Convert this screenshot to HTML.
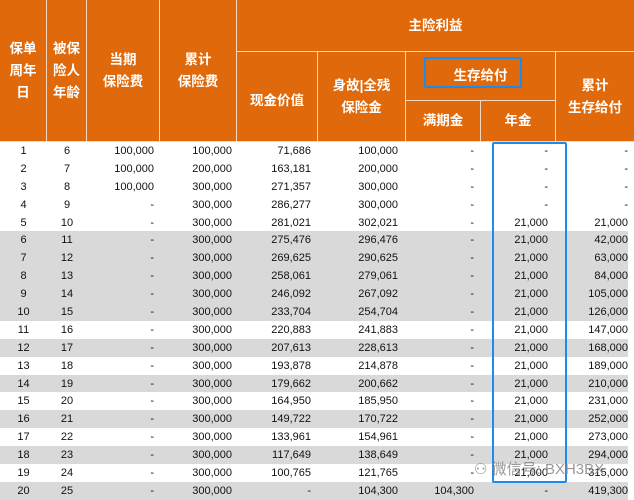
<!DOCTYPE html>
<html><head><meta charset="utf-8"><style>
*{margin:0;padding:0;box-sizing:border-box}
body{width:634px;height:500px;overflow:hidden;background:#fff;position:relative;font-family:"Liberation Sans","Noto Sans CJK SC",sans-serif}
.h{position:absolute;background:#E0690B;color:#fff;font-weight:bold;font-size:13.5px;display:flex;align-items:center;justify-content:center;text-align:center;line-height:22px;border-right:1.5px solid #f6d7bd;border-bottom:1.5px solid #f6d7bd}
table{position:absolute;left:0;top:142px;border-collapse:collapse;font-size:11px;color:#111}
td{height:17.9px;padding:0;text-align:right;white-space:nowrap}
td:nth-child(1),td:nth-child(2){text-align:center}
tr.g td{background:#d9d9d9}
.bx{position:absolute;border:2.5px solid #1a8cf0;border-radius:2px}
</style></head><body>
<div class="h" style="left:0;top:0;width:47px;height:142px">保单<br>周年<br>日</div>
<div class="h" style="left:47px;top:0;width:40px;height:142px">被保<br>险人<br>年龄</div>
<div class="h" style="left:87px;top:0;width:73px;height:142px">当期<br>保险费</div>
<div class="h" style="left:160px;top:0;width:77px;height:142px">累计<br>保险费</div>
<div class="h" style="left:237px;top:0;width:397px;height:52px;border-right:none">主险利益</div>
<div class="h" style="left:237px;top:52px;width:81px;height:90px;padding-top:8px">现金价值</div>
<div class="h" style="left:318px;top:52px;width:88px;height:90px">身故|全残<br>保险金</div>
<div class="h" style="left:406px;top:52px;width:150px;height:49px">生存给付</div>
<div class="h" style="left:406px;top:101px;width:75px;height:41px">满期金</div>
<div class="h" style="left:481px;top:101px;width:75px;height:41px">年金</div>
<div class="h" style="left:556px;top:52px;width:78px;height:90px;border-right:none">累计<br>生存给付</div>
<div class="bx" style="left:424px;top:57px;width:98px;height:31px"></div>
<table>
<colgroup><col style="width:47px"><col style="width:40px"><col style="width:67px"><col style="width:78px"><col style="width:79px"><col style="width:87px"><col style="width:76px"><col style="width:74px"><col style="width:80px"></colgroup>
<tr><td>1</td><td>6</td><td>100,000</td><td>100,000</td><td>71,686</td><td>100,000</td><td>-</td><td>-</td><td>-</td></tr>
<tr><td>2</td><td>7</td><td>100,000</td><td>200,000</td><td>163,181</td><td>200,000</td><td>-</td><td>-</td><td>-</td></tr>
<tr><td>3</td><td>8</td><td>100,000</td><td>300,000</td><td>271,357</td><td>300,000</td><td>-</td><td>-</td><td>-</td></tr>
<tr><td>4</td><td>9</td><td>-</td><td>300,000</td><td>286,277</td><td>300,000</td><td>-</td><td>-</td><td>-</td></tr>
<tr><td>5</td><td>10</td><td>-</td><td>300,000</td><td>281,021</td><td>302,021</td><td>-</td><td>21,000</td><td>21,000</td></tr>
<tr class="g"><td>6</td><td>11</td><td>-</td><td>300,000</td><td>275,476</td><td>296,476</td><td>-</td><td>21,000</td><td>42,000</td></tr>
<tr class="g"><td>7</td><td>12</td><td>-</td><td>300,000</td><td>269,625</td><td>290,625</td><td>-</td><td>21,000</td><td>63,000</td></tr>
<tr class="g"><td>8</td><td>13</td><td>-</td><td>300,000</td><td>258,061</td><td>279,061</td><td>-</td><td>21,000</td><td>84,000</td></tr>
<tr class="g"><td>9</td><td>14</td><td>-</td><td>300,000</td><td>246,092</td><td>267,092</td><td>-</td><td>21,000</td><td>105,000</td></tr>
<tr class="g"><td>10</td><td>15</td><td>-</td><td>300,000</td><td>233,704</td><td>254,704</td><td>-</td><td>21,000</td><td>126,000</td></tr>
<tr><td>11</td><td>16</td><td>-</td><td>300,000</td><td>220,883</td><td>241,883</td><td>-</td><td>21,000</td><td>147,000</td></tr>
<tr class="g"><td>12</td><td>17</td><td>-</td><td>300,000</td><td>207,613</td><td>228,613</td><td>-</td><td>21,000</td><td>168,000</td></tr>
<tr><td>13</td><td>18</td><td>-</td><td>300,000</td><td>193,878</td><td>214,878</td><td>-</td><td>21,000</td><td>189,000</td></tr>
<tr class="g"><td>14</td><td>19</td><td>-</td><td>300,000</td><td>179,662</td><td>200,662</td><td>-</td><td>21,000</td><td>210,000</td></tr>
<tr><td>15</td><td>20</td><td>-</td><td>300,000</td><td>164,950</td><td>185,950</td><td>-</td><td>21,000</td><td>231,000</td></tr>
<tr class="g"><td>16</td><td>21</td><td>-</td><td>300,000</td><td>149,722</td><td>170,722</td><td>-</td><td>21,000</td><td>252,000</td></tr>
<tr><td>17</td><td>22</td><td>-</td><td>300,000</td><td>133,961</td><td>154,961</td><td>-</td><td>21,000</td><td>273,000</td></tr>
<tr class="g"><td>18</td><td>23</td><td>-</td><td>300,000</td><td>117,649</td><td>138,649</td><td>-</td><td>21,000</td><td>294,000</td></tr>
<tr><td>19</td><td>24</td><td>-</td><td>300,000</td><td>100,765</td><td>121,765</td><td>-</td><td>21,000</td><td>315,000</td></tr>
<tr class="g"><td>20</td><td>25</td><td>-</td><td>300,000</td><td>-</td><td>104,300</td><td>104,300</td><td>-</td><td>419,300</td></tr>
</table>
<div class="bx" style="left:492px;top:142px;width:75px;height:341px"></div>
<div style="position:absolute;left:474px;top:458px;font-size:15px;color:#888;opacity:.85">⚇ 微信号: BXH3BX</div>
</body></html>
